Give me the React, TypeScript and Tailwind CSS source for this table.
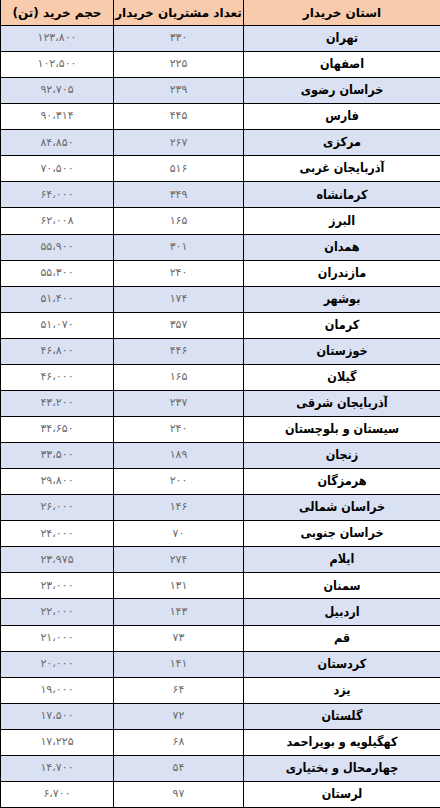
import React from "react";

const rows: [string, string, string][] = [
  ["تهران", "۳۳۰", "۱۲۳،۸۰۰"],
  ["اصفهان", "۲۲۵", "۱۰۲،۵۰۰"],
  ["خراسان رضوی", "۲۳۹", "۹۲،۷۰۵"],
  ["فارس", "۴۴۵", "۹۰،۳۱۴"],
  ["مرکزی", "۲۶۷", "۸۴،۸۵۰"],
  ["آذربایجان غربی", "۵۱۶", "۷۰،۵۰۰"],
  ["کرمانشاه", "۳۴۹", "۶۴،۰۰۰"],
  ["البرز", "۱۶۵", "۶۲،۰۰۸"],
  ["همدان", "۳۰۱", "۵۵،۹۰۰"],
  ["مازندران", "۲۴۰", "۵۵،۳۰۰"],
  ["بوشهر", "۱۷۴", "۵۱،۴۰۰"],
  ["کرمان", "۳۵۷", "۵۱،۰۷۰"],
  ["خوزستان", "۴۴۶", "۴۶،۸۰۰"],
  ["گیلان", "۱۶۵", "۴۶،۰۰۰"],
  ["آذربایجان شرقی", "۲۳۷", "۴۳،۲۰۰"],
  ["سیستان و بلوچستان", "۲۴۰", "۳۴،۶۵۰"],
  ["زنجان", "۱۸۹", "۳۳،۵۰۰"],
  ["هرمزگان", "۲۰۰", "۲۹،۸۰۰"],
  ["خراسان شمالی", "۱۴۶", "۲۶،۰۰۰"],
  ["خراسان جنوبی", "۷۰", "۲۴،۰۰۰"],
  ["ایلام", "۲۷۴", "۲۳،۹۷۵"],
  ["سمنان", "۱۳۱", "۲۳،۰۰۰"],
  ["اردبیل", "۱۴۳", "۲۲،۰۰۰"],
  ["قم", "۷۳", "۲۱،۰۰۰"],
  ["کردستان", "۱۴۱", "۲۰،۰۰۰"],
  ["یزد", "۶۴", "۱۹،۰۰۰"],
  ["گلستان", "۷۲", "۱۷،۵۰۰"],
  ["کهگیلویه و بویراحمد", "۶۸", "۱۷،۲۲۵"],
  ["چهارمحال و بختیاری", "۵۴", "۱۴،۷۰۰"],
  ["لرستان", "۹۷", "۶،۷۰۰"],
];

export default function App() {
  return (
    <div
      className="w-[440px] h-[808px] bg-white grid grid-cols-[113px_130px_1fr] grid-rows-[26px_repeat(30,1fr)] overflow-hidden"
      style={{ fontFamily: '"DejaVu Sans", sans-serif' }}
    >
      <div dir="rtl" className="bg-[#f8cbad] border-l border-b border-black flex items-center justify-center text-[12px] font-bold text-black">
        حجم خرید (تن)
      </div>
      <div dir="rtl" className="bg-[#f8cbad] border-l border-b border-black flex items-center justify-center text-[12px] font-bold text-black">
        تعداد مشتریان خریدار
      </div>
      <div dir="rtl" className="bg-[#f8cbad] border-l border-b border-black flex items-center justify-center text-[12px] font-bold text-black">
        استان خریدار
      </div>
      {rows.map(([name, count, vol], i) => {
        const bg = i % 2 === 0 ? "bg-[#d9e1f2]" : "bg-white";
        return (
          <React.Fragment key={i}>
            <div dir="rtl" className={`${bg} border-l border-b border-black flex items-center justify-center text-[11px] text-[#6b6b6b]`}>
              {vol}
            </div>
            <div dir="rtl" className={`${bg} border-l border-b border-black flex items-center justify-center text-[11px] text-[#6b6b6b]`}>
              {count}
            </div>
            <div
              dir="rtl"
              className={`${bg} border-l border-b border-black flex items-center justify-center text-[12.5px] font-bold text-black`}
              style={{ fontFamily: '"DejaVu Sans Condensed", "DejaVu Sans", sans-serif' }}
            >
              {name}
            </div>
          </React.Fragment>
        );
      })}
    </div>
  );
}
